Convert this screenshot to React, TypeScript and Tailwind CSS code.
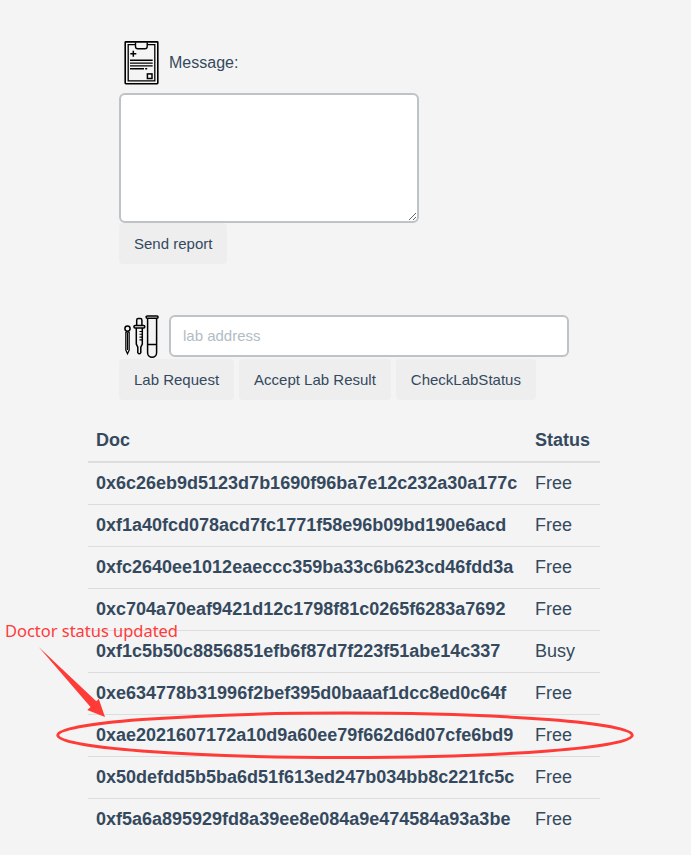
import React from "react";

const rows: [string, string][] = [
  ["0x6c26eb9d5123d7b1690f96ba7e12c232a30a177c", "Free"],
  ["0xf1a40fcd078acd7fc1771f58e96b09bd190e6acd", "Free"],
  ["0xfc2640ee1012eaeccc359ba33c6b623cd46fdd3a", "Free"],
  ["0xc704a70eaf9421d12c1798f81c0265f6283a7692", "Free"],
  ["0xf1c5b50c8856851efb6f87d7f223f51abe14c337", "Busy"],
  ["0xe634778b31996f2bef395d0baaaf1dcc8ed0c64f", "Free"],
  ["0xae2021607172a10d9a60ee79f662d6d07cfe6bd9", "Free"],
  ["0x50defdd5b5ba6d51f613ed247b034bb8c221fc5c", "Free"],
  ["0xf5a6a895929fd8a39ee8e084a9e474584a93a3be", "Free"],
];

function ReportIcon() {
  return (
    <svg width="45" height="45" viewBox="0 0 45 45" fill="none" stroke="#000" className="shrink-0">
      <rect x="6.2" y="1.9" width="32.6" height="41.8" rx="0.6" strokeWidth="1.6" />
      <path d="M16.5 4.6H9.2V40.8H35.8V4.6H28.2" strokeWidth="1.3" />
      <path d="M16.5 2.2V6.4Q16.5 8.7 18.8 8.7H25.9Q28.2 8.7 28.2 6.4V2.2" strokeWidth="1.4" />
      <path d="M11.3 13.7H17.3M14.3 10.7V16.7" strokeWidth="1.5" />
      <path d="M11 20.3H33.7M11 23.1H33.7M11 25.9H33.7M11 28.7H25M26.2 28.7H28.2" strokeWidth="1.4" />
      <rect x="28.4" y="33.9" width="4.6" height="4.6" strokeWidth="1.5" />
    </svg>
  );
}

function LabIcon() {
  return (
    <svg width="45" height="45" viewBox="0 0 45 45" fill="none" stroke="#000" strokeWidth="1.5" className="-mt-px shrink-0">
      <circle cx="8.5" cy="14.6" r="2.6" />
      <path d="M6.6 18.2H10.4M6.8 18V36L8.5 39.7L10.2 36V18M8.5 19V36" strokeWidth="1.2" />
      <path d="M17.7 11.6V6.3Q17.7 4.6 19.3 4.6H21.3Q22.9 4.6 22.9 6.3V11.6" />
      <rect x="14.9" y="11.6" width="10.9" height="2.4" rx="1.2" />
      <path d="M17.3 14V30L18.8 33.2V38.6Q20.3 41 21.8 38.6V33.2L23.3 30V14" />
      <path d="M20.5 17.5H23M20.5 20.3H23M20.5 23.1H23M20.5 25.9H23" strokeWidth="1.1" />
      <rect x="27.1" y="1.9" width="12" height="2.3" rx="1.15" />
      <path d="M28.6 4.3V38.8A4.4 4.4 0 0 0 37.6 38.8V4.3M28.6 30.4H37.6" />
    </svg>
  );
}

function Button({ children }: { children: React.ReactNode }) {
  return (
    <button className="h-[41px] rounded-[4px] bg-[#eeeeee] px-[15px] text-[15px] leading-[21px] whitespace-nowrap">
      {children}
    </button>
  );
}

export default function App() {
  return (
    <div className="relative h-[855px] w-[691px] overflow-hidden bg-[#f4f4f4] pt-10 font-['Liberation_Sans',Arial,sans-serif] text-[#34495e]">
      <section className="ml-[119px]">
        <div className="flex h-[53px] items-start gap-[5px]">
          <ReportIcon />
          <label htmlFor="message" className="pt-[11px] text-base leading-6">Message:</label>
        </div>
        <textarea id="message" className="block h-[130px] w-[300px] resize rounded-md border-2 border-[#bdc3c7] bg-white outline-none" />
        <div className="flex">
          <Button>Send report</Button>
        </div>
      </section>

      <section className="mt-[51px] ml-[119px]">
        <div className="flex h-[44px] items-start gap-[5px]">
          <LabIcon />
          <input
            placeholder="lab address"
            className="h-[42px] w-[400px] rounded-md border-2 border-[#bdc3c7] bg-white px-3 pb-[2px] text-[15px] outline-none placeholder:text-[#b2bcc5]"
          />
        </div>
        <div className="flex gap-[5px]">
          <Button>Lab Request</Button>
          <Button>Accept Lab Result</Button>
          <Button>CheckLabStatus</Button>
        </div>
      </section>

      <table className="mt-[19px] ml-[88px] w-[512px] table-fixed border-separate border-spacing-0 text-left text-[18px]">
        <thead>
          <tr className="h-[44px]">
            <th className="w-[439px] border-b-2 border-[#dddddd] px-2 py-0 font-bold">Doc</th>
            <th className="border-b-2 border-[#dddddd] px-2 py-0 font-bold">Status</th>
          </tr>
        </thead>
        <tbody>
          {rows.map(([doc, status]) => (
            <tr key={doc} className="group h-[42px]">
              <th className="border-b border-[#dddddd] px-2 py-0 font-bold group-last:border-transparent">{doc}</th>
              <td className="border-b border-[#dddddd] px-2 py-0 group-last:border-transparent">{status}</td>
            </tr>
          ))}
        </tbody>
      </table>

      <span className="absolute top-[619px] left-[5px] text-[16.5px] leading-6 tracking-[-0.03px] whitespace-nowrap text-[#ff3b3b] font-['Noto_Sans',sans-serif]">
        Doctor status updated
      </span>
      <svg className="pointer-events-none absolute top-0 left-0" width="691" height="855" viewBox="0 0 691 855">
        <path d="M38.7 647L96.3 701.3L98.8 699L105 717L87.2 710L90.5 707Z" fill="#ff3b38" />
        <ellipse cx="345" cy="735.3" rx="287.2" ry="22.2" fill="none" stroke="#ff3b38" strokeWidth="3" />
      </svg>
    </div>
  );
}
